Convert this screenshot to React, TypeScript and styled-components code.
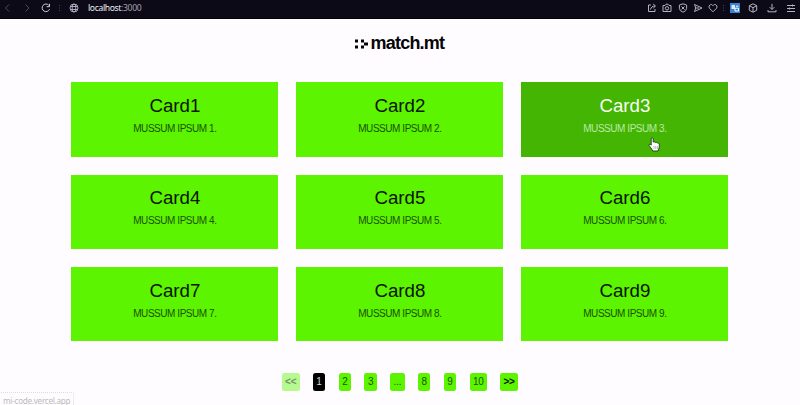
import React from "react";
import styled, { createGlobalStyle } from "styled-components";

const GlobalStyle = createGlobalStyle`
  * { box-sizing: border-box; }
  body { margin: 0; background: #fefcff; font-family: "Liberation Sans", Arial, sans-serif; }
`;

const Page = styled.div`
  position: relative;
  width: 800px;
  height: 405px;
  overflow: hidden;
`;

const BrowserBar = styled.div`
  height: 19px;
  padding: 0 4px 3px 3px;
  background: #0d0a17;
  border-bottom: 1px solid #020106;
  display: flex;
  align-items: center;
  justify-content: space-between;
`;

const BarGroup = styled.div`
  display: flex;
  align-items: center;
`;

const BarIcon = styled.svg<{ $gap?: number; $tone?: string }>`
  display: block;
  flex: none;
  width: 10px;
  height: 10px;
  margin-left: ${(p) => p.$gap ?? 0}px;
  fill: none;
  stroke: ${(p) => p.$tone ?? "#b5b2c0"};
  stroke-width: 1;
`;

const Address = styled.span`
  margin-left: 9px;
  font: 8.6px/12px "Noto Sans", sans-serif;
  letter-spacing: -0.36px;
  color: #a5a2ae;
  white-space: nowrap;
`;

const Host = styled.span`
  color: #eeecf3;
`;

const Header = styled.header`
  height: 63.3px;
  padding: 14px 0 0 355px;
  display: flex;
  align-items: flex-start;
`;

const LogoMark = styled.svg`
  display: block;
  width: 15px;
  height: 12px;
  margin-top: 5px;
`;

const LogoText = styled.span`
  margin-left: 0.5px;
  font-size: 18px;
  line-height: 21px;
  font-weight: 700;
  letter-spacing: -0.78px;
  color: #060506;
`;

const CardGrid = styled.main`
  margin-left: 71.4px;
  display: grid;
  grid-template-columns: repeat(3, 207px);
  grid-auto-rows: 74.4px;
  gap: 18px;
`;

const Card = styled.article<{ $hovered: boolean }>`
  padding-top: 12.7px;
  background: ${(p) => (p.$hovered ? "#43b502" : "#5cf400")};
  color: ${(p) => (p.$hovered ? "#f8fff4" : "#071300")};
  text-align: center;
`;

const CardTitle = styled.h2`
  margin: 0;
  font-size: 18.7px;
  line-height: 22px;
  font-weight: 400;
`;

const CardText = styled.p<{ $hovered: boolean }>`
  margin: 6px 0 0;
  font-size: 10px;
  line-height: 12px;
  letter-spacing: -0.45px;
  color: ${(p) => (p.$hovered ? "#bce9a4" : "#1b5200")};
`;

const Pagination = styled.nav`
  margin: 31.6px 0 0 282px;
  display: flex;
  gap: 13.3px;
`;

type PageVariant = "normal" | "active" | "disabled" | "next";

const pageColors: Record<PageVariant, [string, string]> = {
  normal: ["#5cf400", "#1d5600"],
  active: ["#000000", "#d8d8d8"],
  disabled: ["#b6f990", "#75945f"],
  next: ["#5cf400", "#071300"],
};

const PageButton = styled.button<{ $variant: PageVariant; $width: number }>`
  flex: none;
  width: ${(p) => p.$width}px;
  height: 18px;
  padding: 0;
  border: 0;
  border-radius: 2.5px;
  background: ${(p) => pageColors[p.$variant][0]};
  color: ${(p) => pageColors[p.$variant][1]};
  font: ${(p) => (p.$variant === "next" || p.$variant === "disabled" ? 700 : 400)} 10px/18px
    "Liberation Sans", Arial, sans-serif;
  text-align: center;
  letter-spacing: -0.2px;
`;

const StatusBubble = styled.div`
  position: absolute;
  left: -1px;
  bottom: -3px;
  width: 75px;
  height: 16px;
  padding: 2px 0 0 3px;
  border: 1px dotted #dedbd8;
  border-top-right-radius: 2px;
  background: #fefcff;
  color: #bdbbbc;
  font: 8.2px/12px "Noto Sans", sans-serif;
  letter-spacing: -0.3px;
  white-space: nowrap;
`;

const Pointer = styled.svg`
  position: absolute;
  left: 648px;
  top: 137px;
  width: 12px;
  height: 15px;
`;

const HOVERED = 3;
const cards = [1, 2, 3, 4, 5, 6, 7, 8, 9];

const pages: { label: string; variant: PageVariant; width: number }[] = [
  { label: "<<", variant: "disabled", width: 17.5 },
  { label: "1", variant: "active", width: 12.5 },
  { label: "2", variant: "normal", width: 12.5 },
  { label: "3", variant: "normal", width: 12.5 },
  { label: "...", variant: "normal", width: 14.5 },
  { label: "8", variant: "normal", width: 12.5 },
  { label: "9", variant: "normal", width: 12.5 },
  { label: "10", variant: "normal", width: 17.5 },
  { label: ">>", variant: "next", width: 17.5 },
];

function BrowserChrome() {
  return (
    <BrowserBar>
      <BarGroup>
        <BarIcon viewBox="0 0 10 10" $tone="#514e5c"><path d="M6 1.5 2.5 5 6 8.5" /></BarIcon>
        <BarIcon viewBox="0 0 10 10" $gap={9} $tone="#514e5c"><path d="M3.5 1.5 7 5 3.5 8.5" /></BarIcon>
        <BarIcon viewBox="0 0 10 10" $gap={9} $tone="#d0cdd8"><path d="M8.5 6.2A3.8 3.8 0 1 1 7.8 2.3M8.5.8V3.7H5.6" /></BarIcon>
        <BarIcon viewBox="0 0 10 10" $gap={4} $tone="#474451"><path d="M4.5 2v1M4.5 4.5v1M4.5 7v1" /></BarIcon>
        <BarIcon viewBox="0 0 10 10" $gap={4} $tone="#aaa7bd">
          <circle cx="5" cy="5" r="4" /><ellipse cx="5" cy="5" rx="1.8" ry="4" /><path d="M1.2 3.5h7.6M1.2 6.5h7.6" />
        </BarIcon>
        <Address><Host>localhost</Host>:3000</Address>
      </BarGroup>
      <BarGroup>
        <BarIcon viewBox="0 0 10 10"><path d="M4 2H1.5v6.5H8V6M3.5 6.5C4 4.2 5.5 3 8 3M6.2 1 8.5 3 6.2 5.2" /></BarIcon>
        <BarIcon viewBox="0 0 10 10" $gap={5}><path d="M1 2.5h2L4 1.2h2L7 2.5h2v6H1Z" /><circle cx="5" cy="5.3" r="1.7" /></BarIcon>
        <BarIcon viewBox="0 0 10 10" $gap={6}><path d="M5 .8 8.6 2v3.5Q8.4 8 5 9.2 1.6 8 1.4 5.5V2ZM3.5 3.5l3 3M6.5 3.5l-3 3" /></BarIcon>
        <BarIcon viewBox="0 0 10 10" $gap={5}><path d="M1.5 1.5 9 5 1.5 8.5 2.7 5ZM2.7 5H6" /></BarIcon>
        <BarIcon viewBox="0 0 10 10" $gap={5}><path d="M5 8.8 1.5 5.3C-.2 2.8 3-.1 5 2.6 7-.1 10.2 2.8 8.5 5.3Z" /></BarIcon>
        <BarIcon viewBox="0 0 10 10" $gap={0} $tone="#474451"><path d="M5.5 2v1M5.5 4.5v1M5.5 7v1" /></BarIcon>
        <BarIcon viewBox="0 0 10 10" $gap={2} $tone="#ffffff">
          <rect width="10" height="10" fill="#3983d2" stroke="none" />
          <rect x="1.5" y="2" width="3.5" height="4" fill="#d8eaff" stroke="none" />
          <path d="M5 5.2h3.5v2.8H5ZM6 3.2h2.5" />
        </BarIcon>
        <BarIcon viewBox="0 0 10 10" $gap={8}><path d="M5 .8 8.7 2.7v4.6L5 9.2 1.3 7.3V2.7ZM1.3 2.7 5 4.7l3.7-2M5 4.7v4.5" /></BarIcon>
        <BarIcon viewBox="0 0 10 10" $gap={9}><path d="M5 .8v5.5M2.7 4.2 5 6.5l2.3-2.3M1 7v1.8h8V7" /></BarIcon>
        <BarIcon viewBox="0 0 10 10" $gap={9}><path d="M1 2.5h8M1 5.5h8M1 8.5h8M6.5 1.5v2M3.5 4.5v2" /></BarIcon>
      </BarGroup>
    </BrowserBar>
  );
}

export default function App() {
  return (
    <Page>
      <GlobalStyle />
      <BrowserChrome />
      <Header>
        <LogoMark viewBox="0 0 15 12">
          <path d="M0 1.5h3v3H0zM0 7.5h3v3H0zM6 1.5h3v3H6zM6 7.5h3v3H6zM9 4.5h4v3H9z" fill="#060506" />
        </LogoMark>
        <LogoText>match.mt</LogoText>
      </Header>
      <CardGrid>
        {cards.map((n) => (
          <Card key={n} $hovered={n === HOVERED}>
            <CardTitle>Card{n}</CardTitle>
            <CardText $hovered={n === HOVERED}>MUSSUM IPSUM {n}.</CardText>
          </Card>
        ))}
      </CardGrid>
      <Pagination>
        {pages.map((p) => (
          <PageButton key={p.label} $variant={p.variant} $width={p.width}>{p.label}</PageButton>
        ))}
      </Pagination>
      <StatusBubble>mi-code.vercel.app</StatusBubble>
      <Pointer viewBox="0 0 12 15">
        <path
          d="M3.2 1.5Q4.2.2 5.2 1.5V5l1.4-.1.8.5 1.3-.1.7.7 1.3.2.6.9v3.2L10 14H4.8L3 11 1 8.4Q.9 7 2.2 7.3l1 .8Z"
          fill="#fff" stroke="#1d3a14" strokeWidth="0.9" strokeLinejoin="round"
        />
        <path d="M6 9v3M7.8 9v3M9.5 9v3" stroke="#777" strokeWidth="0.5" />
      </Pointer>
    </Page>
  );
}
